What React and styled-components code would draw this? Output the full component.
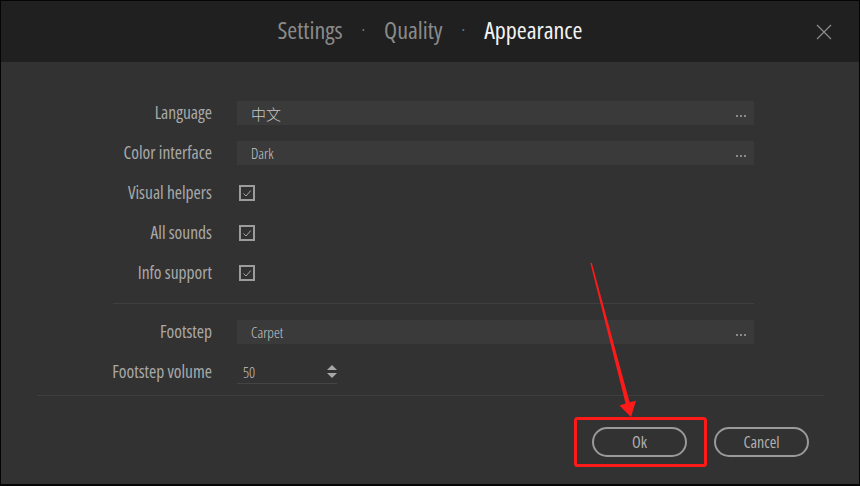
import React from "react";
import styled, { createGlobalStyle } from "styled-components";

const Global = createGlobalStyle`
  html, body { margin: 0; padding: 0; background: #000; }
  * { box-sizing: border-box; }
`;

const FONT = `"Open Sans", "Noto Sans CJK SC", sans-serif`;

const Frame = styled.div`
  position: relative;
  width: 860px;
  height: 486px;
  border: 1px solid #050505;
  border-bottom-width: 2px;
  background: #323232;
  font-family: ${FONT};
  font-stretch: 75%;
  display: flex;
  flex-direction: column;
  overflow: hidden;
`;

const Header = styled.header`
  height: 61px;
  flex: none;
  background: #202020;
  display: grid;
  grid-template-columns: 1fr auto 1fr;
  align-items: center;
`;

const Tabs = styled.nav`
  grid-column: 2;
  display: flex;
  align-items: center;
  gap: 19px;
  font-size: 24px;
  padding-bottom: 4px;
`;

const Tab = styled.span`
  color: ${(p) => (p.$active ? "#f4f4f4" : "#8a8a8a")};
`;

const Dot = styled.span`
  color: #7a7a7a;
  font-size: 16px;
`;

const Close = styled.button`
  grid-column: 3;
  justify-self: end;
  margin-right: 26px;
  width: 18px;
  height: 18px;
  padding: 0;
  border: none;
  background: none;
  display: flex;
  align-items: center;
  justify-content: center;
`;

const Body = styled.main`
  flex: 1;
  display: flex;
  flex-direction: column;
  padding-top: 39px;
`;

const Form = styled.div`
  display: grid;
  grid-template-columns: 211px 517px;
  column-gap: 25px;
  row-gap: 16px;
  align-items: center;
`;

const Label = styled.label`
  justify-self: end;
  color: #a9a9a9;
  font-size: 17.5px;
  white-space: nowrap;
  line-height: 22px;
  padding-bottom: 2px;
`;

const Field = styled.div`
  height: 24px;
  background: #3a3a3a;
  display: flex;
  align-items: center;
  padding: 0 8px 0 14px;
  color: #c8c8c8;
  font-weight: 300;
`;

const FieldText = styled.span`
  flex: 1;
  font-size: 15px;
  font-family: ${(p) => (p.$cjk ? `"Noto Sans CJK SC", sans-serif` : "inherit")};
`;

const Dots = styled.span`
  display: flex;
  gap: 2px;
  margin-top: 6px;
  & > i {
    width: 2px;
    height: 2px;
    background: #8a8a8a;
  }
`;

const CheckCell = styled.div`
  height: 24px;
  display: flex;
  align-items: center;
  padding-left: 2px;
`;

const Box = styled.span`
  width: 16px;
  height: 16px;
  border: 2px solid #9c9c9c;
  display: flex;
  align-items: center;
  justify-content: center;
`;

const Rule = styled.hr`
  grid-column: 1 / -1;
  margin: 2px 0 0 112px;
  height: 1px;
  border: none;
  background: #3f3f3f;
`;

const NumberCell = styled.div`
  height: 24px;
  width: 100px;
  border-bottom: 1px solid #444;
  display: flex;
  align-items: center;
  padding: 0 0 0 6px;
  color: #c4c4c4;
  font-size: 15px;
  font-weight: 300;
`;

const NumText = styled.span`
  flex: 1;
`;

const Spinner = styled.span`
  display: flex;
  flex-direction: column;
  gap: 3px;
`;

const Divider = styled.hr`
  margin: 11px 35px 0 36px;
  height: 1px;
  border: none;
  background: #3f3f3f;
`;

const Footer = styled.footer`
  display: flex;
  justify-content: flex-end;
  gap: 27px;
  padding: 31px 50px 0 0;
`;

const PillButton = styled.button`
  width: 95px;
  height: 30px;
  border-radius: 15px;
  border: 2px solid #9a9a9a;
  background: transparent;
  color: #b0b0b0;
  font-family: ${FONT};
  font-stretch: 75%;
  font-size: 16px;
  padding: 0;
`;

const Overlay = styled.svg`
  position: absolute;
  left: -1px;
  top: -1px;
  width: 860px;
  height: 486px;
  pointer-events: none;
`;

function Ellipsis() {
  return (
    <Dots>
      <i />
      <i />
      <i />
    </Dots>
  );
}

function Check() {
  return (
    <CheckCell>
      <Box>
        <svg width="10" height="8" viewBox="0 0 10 8">
          <path d="M1.5 4.5 L4 7 L8.8 1.5" fill="none" stroke="#a8a8a8" strokeWidth="1" />
        </svg>
      </Box>
    </CheckCell>
  );
}

export default function App() {
  return (
    <>
      <Global />
      <Frame>
        <Header>
          <Tabs>
            <Tab>Settings</Tab>
            <Dot>·</Dot>
            <Tab>Quality</Tab>
            <Dot>·</Dot>
            <Tab $active>Appearance</Tab>
          </Tabs>
          <Close aria-label="Close">
            <svg width="16" height="16" viewBox="0 0 16 16">
              <path d="M1 1 L15 15 M15 1 L1 15" stroke="#8a8a8a" strokeWidth="1.3" />
            </svg>
          </Close>
        </Header>
        <Body>
          <Form>
            <Label>Language</Label>
            <Field>
              <FieldText $cjk>中文</FieldText>
              <Ellipsis />
            </Field>
            <Label>Color interface</Label>
            <Field>
              <FieldText>Dark</FieldText>
              <Ellipsis />
            </Field>
            <Label>Visual helpers</Label>
            <Check />
            <Label>All sounds</Label>
            <Check />
            <Label>Info support</Label>
            <Check />
            <Rule />
            <Label>Footstep</Label>
            <Field>
              <FieldText>Carpet</FieldText>
              <Ellipsis />
            </Field>
            <Label>Footstep volume</Label>
            <NumberCell>
              <NumText>50</NumText>
              <Spinner>
                <svg width="10" height="5" viewBox="0 0 10 5">
                  <path d="M5 0 L10 5 L0 5 Z" fill="#a8a8a8" />
                </svg>
                <svg width="10" height="5" viewBox="0 0 10 5">
                  <path d="M0 0 L10 0 L5 5 Z" fill="#a8a8a8" />
                </svg>
              </Spinner>
            </NumberCell>
          </Form>
          <Divider />
          <Footer>
            <PillButton>Ok</PillButton>
            <PillButton>Cancel</PillButton>
          </Footer>
        </Body>
        <Overlay viewBox="0 0 860 486">
          <rect x="575.5" y="418.5" width="130" height="47" rx="2" fill="none" stroke="#ff1a1a" strokeWidth="3" />
          <polygon
            points="590.4,263.2 591.8,262.8 629.6,402.2 636,400.8 631,417 619.5,405.6 625.6,403.4"
            fill="#ff1a1a"
          />
        </Overlay>
      </Frame>
    </>
  );
}
